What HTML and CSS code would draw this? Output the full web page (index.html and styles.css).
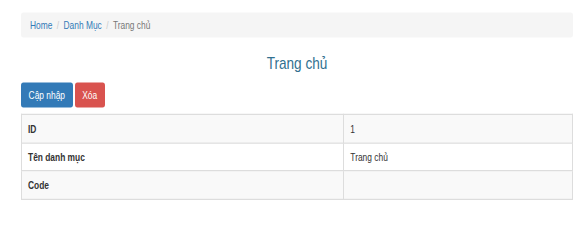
FILE: index.html
```html
<!DOCTYPE html>
<html lang="vi">

<head>
    <meta charset="UTF-8">
    <meta name="viewport" content="width=device-width, initial-scale=1.0">
    <title>Trang chủ</title>
    <link rel="stylesheet" href="styles.css">
</head>

<body>
    <div class="page">
        <ol class="breadcrumb">
            <li><a href="#">Home</a></li>
            <li><a href="#">Danh Mục</a></li>
            <li class="active">Trang chủ</li>
        </ol>
        <h3 class="title">Trang chủ</h3>
        <div class="actions">
            <a href="#" class="btn btn-primary">Cập nhập</a>
            <a href="#" class="btn btn-danger">Xóa</a>
        </div>
        <table class="table">
            <tr>
                <th>ID</th>
                <td>1</td>
            </tr>
            <tr>
                <th>Tên danh mục</th>
                <td>Trang chủ</td>
            </tr>
            <tr>
                <th>Code</th>
                <td></td>
            </tr>
        </table>
    </div>
</body>

</html>
```

FILE: styles.css
```css
html,
body {
    height: 100%;
}

body {
    margin: 0;
    font-family: "Liberation Sans", Arial, sans-serif;
    font-size: 10.5px;
    color: #333333;
    background: #ffffff;
}

/* the shot is squeezed sideways: shrink the page, then stretch it back up */
.page {
    box-sizing: border-box;
    width: 725px;
    padding: 12px 8.75px 0 26.25px;
    zoom: 0.8;
    transform: scaleY(1.25);
    transform-origin: 0 0;
}

.breadcrumb {
    list-style: none;
    margin: 0;
    padding: 2px 11.25px 0;
    height: 24px;
    line-height: 24px;
    background: #f5f5f5;
    border-radius: 3px;
    display: flex;
}

.breadcrumb li + li::before {
    content: '/';
    color: #cccccc;
    padding: 0 5.5px;
}

.breadcrumb a {
    color: #337ab7;
    text-decoration: none;
}

.breadcrumb .active {
    color: #777777;
}

.title {
    margin: 16px 0 8px;
    line-height: 20px;
    text-align: center;
    font-size: 17px;
    font-weight: normal;
    color: #31708f;
}

.actions {
    display: flex;
    gap: 2.5px;
    height: 25px;
}

.btn {
    display: block;
    padding: 0 9.5px;
    line-height: 25px;
    border-radius: 3px;
    color: #ffffff;
    text-decoration: none;
}

.btn-primary {
    background: #337ab7;
}

.btn-danger {
    background: #d9534f;
}

.table {
    margin-top: 7px;
    width: 100%;
    border-collapse: collapse;
    border: 1px solid #dddddd;
}

.table th,
.table td {
    border: 1px solid #dddddd;
    height: 27px;
    padding: 0 7.5px;
    text-align: left;
    color: #333333;
}

.table th {
    width: 58.5%;
}

.table tr:nth-child(odd) {
    background: #f9f9f9;
}
```
